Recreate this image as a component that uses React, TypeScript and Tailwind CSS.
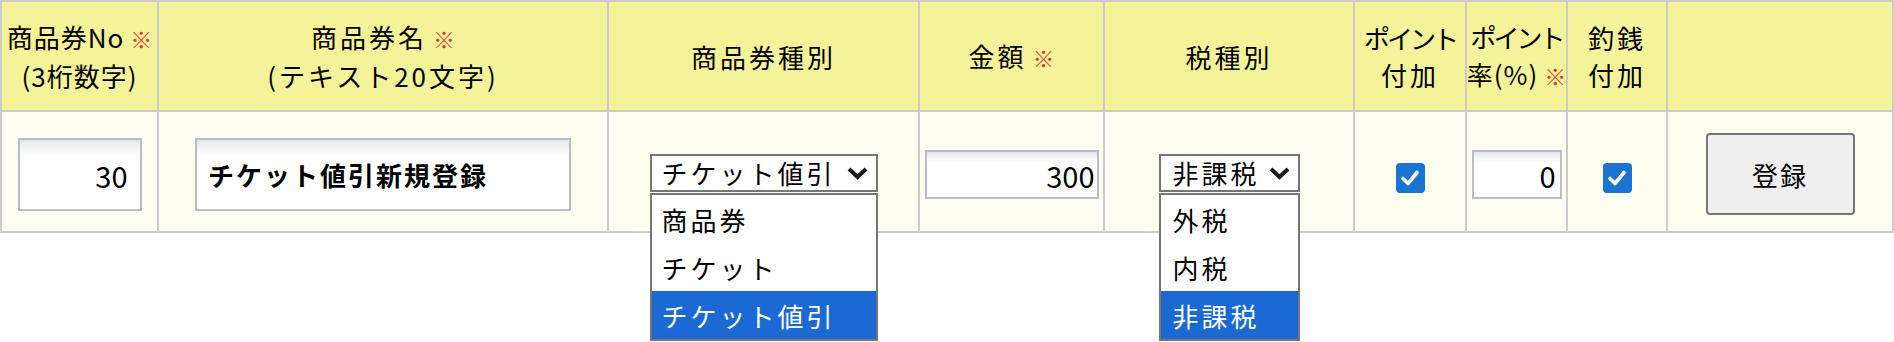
import React from "react";

const font = "font-['Noto_Sans_CJK_JP',sans-serif]";
const head =
  "bg-[#f5f399] flex items-center justify-center text-center whitespace-nowrap leading-[37px] tracking-[3px]";
const cell = "bg-[#fefef0] flex items-center justify-center";
const field =
  "border-2 border-[#b8bccb] bg-[linear-gradient(to_bottom,#e4e7eb,#ffffff_22%)] text-black outline-none";

function Req() {
  return <span className="text-[#d83a3a] text-[22px] ml-[6px] tracking-normal">※</span>;
}

function Chevron() {
  return (
    <svg width="23" height="14" viewBox="0 0 23 14" className="shrink-0">
      <polyline points="3,3 11.5,11 20,3" fill="none" stroke="#1c1c1c" strokeWidth="4" strokeLinejoin="miter" />
    </svg>
  );
}

function Check() {
  return (
    <div className="w-[29px] h-[30px] rounded-[4px] bg-[#1a74d4] flex items-center justify-center mt-[13px]">
      <svg width="20" height="18" viewBox="0 0 20 18">
        <polyline points="3,9.5 8,14.5 17,3.5" fill="none" stroke="#ffffff" strokeWidth="3.6" strokeLinecap="round" strokeLinejoin="round" />
      </svg>
    </div>
  );
}

function Dropdown({
  value,
  options,
  width,
  pad,
}: {
  value: string;
  options: string[];
  width: string;
  pad: string;
}) {
  return (
    <div className={`relative mt-[3px] ${width}`}>
      <div className={`h-[38px] border-2 border-[#767676] bg-white flex items-center justify-between pr-[7px] ${pad}`}>
        <span className="tracking-[3px] leading-none">{value}</span>
        <Chevron />
      </div>
      <div className="absolute left-0 top-full w-full mt-[1px] border-2 border-[#767676] bg-white z-10">
        {options.map((o) => (
          <div
            key={o}
            className={`h-[48px] flex items-center tracking-[3px] ${pad} ${
              o === value ? "bg-[#1b69d3] text-white" : "text-black"
            }`}
          >
            {o}
          </div>
        ))}
      </div>
    </div>
  );
}

export default function App() {
  return (
    <div className={`w-[1894px] h-[342px] bg-white text-black text-[26px] ${font}`}>
      <div className="grid grid-cols-[155px_448px_309px_183px_248px_110px_99px_98px_224px] grid-rows-[108px_119px] gap-[2px] p-[2px] bg-[#cccccc] w-[1894px]">
        <div className={head}>
          <div className="tracking-[1px]">
            商品券No<Req />
            <br />
            (3桁数字)
          </div>
        </div>
        <div className={head}>
          <div>
            商品券名<Req />
            <br />
            (テキスト20文字)
          </div>
        </div>
        <div className={head}>商品券種別</div>
        <div className={head}>
          <div>
            金額<Req />
          </div>
        </div>
        <div className={head}>税種別</div>
        <div className={head}>
          <div className="tracking-[-3px]">
            ポイント
            <br />
            <span className="tracking-[3px]">付加</span>
          </div>
        </div>
        <div className={head}>
          <div className="tracking-[-3px]">
            ポイント
            <br />
            <span className="tracking-[1px]">率(%)</span>
            <Req />
          </div>
        </div>
        <div className={head}>
          <div>
            釣銭
            <br />
            付加
          </div>
        </div>
        <div className={head}></div>

        <div className={cell}>
          <input
            readOnly
            value="30"
            className={`${field} w-[124px] h-[73px] mt-[6px] text-right pr-[12px] text-[29px]`}
          />
        </div>
        <div className={cell}>
          <input
            readOnly
            value="チケット値引新規登録"
            className={`${field} w-[376px] h-[73px] mt-[6px] pl-[11px] font-bold tracking-[2px] text-[26px]`}
          />
        </div>
        <div className={cell}>
          <Dropdown value="チケット値引" options={["商品券", "チケット", "チケット値引"]} width="w-[228px]" pad="pl-[10px]" />
        </div>
        <div className={cell}>
          <input
            readOnly
            value="300"
            className={`${field} w-[174px] h-[49px] mt-[6px] text-right pr-[2px] text-[29px]`}
          />
        </div>
        <div className={cell}>
          <Dropdown value="非課税" options={["外税", "内税", "非課税"]} width="w-[141px]" pad="pl-[12px]" />
        </div>
        <div className={cell}>
          <Check />
        </div>
        <div className={cell}>
          <input
            readOnly
            value="0"
            className={`${field} w-[90px] h-[49px] mt-[6px] text-right pr-[4px] text-[29px]`}
          />
        </div>
        <div className={cell}>
          <Check />
        </div>
        <div className={cell}>
          <button className="w-[149px] h-[82px] mt-[5px] bg-[#efefef] border-2 border-[#767676] rounded-[4px] tracking-[2px]">
            登録
          </button>
        </div>
      </div>
    </div>
  );
}
